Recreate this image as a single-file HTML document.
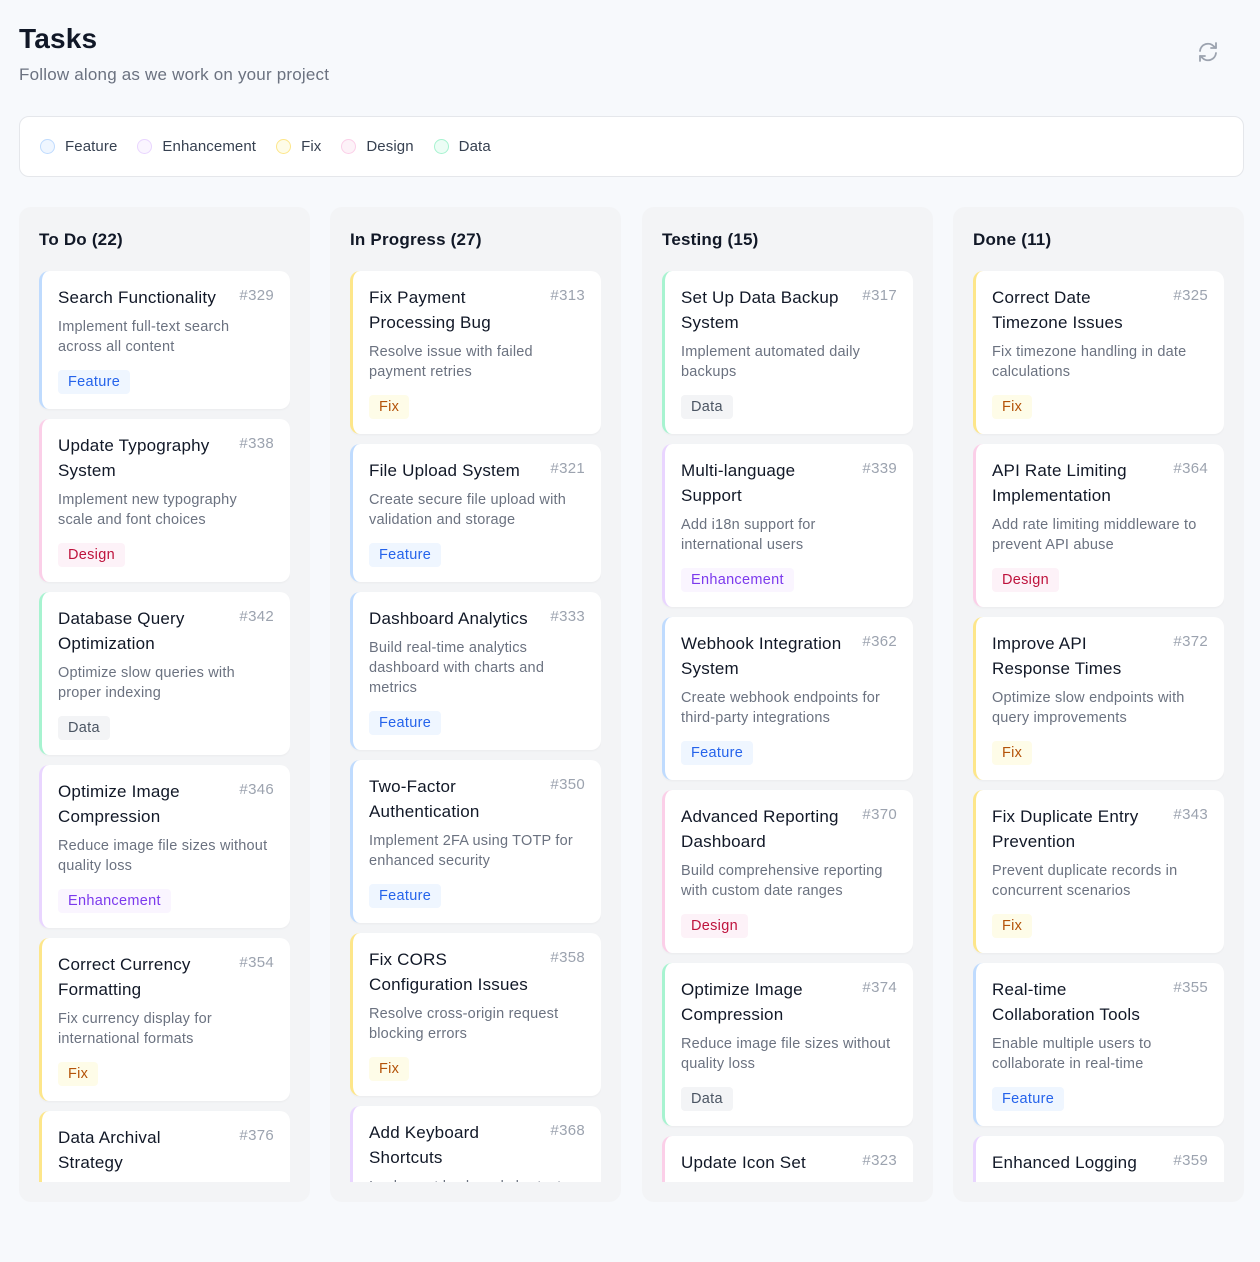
<!DOCTYPE html>
<html><head><meta charset="utf-8"><style>
*{box-sizing:border-box;margin:0;padding:0}
body{width:1260px;height:1262px;background:#f7f9fc;font-family:"Liberation Sans",sans-serif;color:#111827;position:relative;overflow:hidden}
h1{position:absolute;left:19px;top:23px;font-size:28px;font-weight:700;letter-spacing:0.2px}
.sub{position:absolute;left:19px;top:65px;font-size:17px;color:#6b7280;letter-spacing:0.2px}
.ref{position:absolute;left:1196px;top:40px}
.legend{position:absolute;left:19px;top:116px;width:1225px;height:61px;background:#fff;border:1px solid #e5e7eb;border-radius:10px;display:flex;align-items:center;padding-left:20px;font-size:15px;color:#374151;letter-spacing:0.1px}
.legend span{display:flex;align-items:center;margin-right:20px}
.legend i{width:15px;height:15px;border-radius:50%;margin-right:10px;border:1px solid}
.col{position:absolute;top:207px;width:291px;height:995px;background:#f3f4f6;border-radius:12px;padding:0 20px 20px 20px}
.col h2{font-size:17px;font-weight:700;height:64px;line-height:65px;letter-spacing:0.2px}
.list{height:911px;overflow:hidden}
.card{background:#fff;border-radius:10px;border-left:3px solid;padding:14px 16px 15px 16px;margin-bottom:10px;position:relative;box-shadow:0 1px 2px rgba(0,0,0,0.04)}
.t{font-size:17px;line-height:25px;white-space:nowrap;letter-spacing:0.2px}
.n{position:absolute;right:16px;top:14px;font-size:15px;color:#9ca3af;line-height:22px;letter-spacing:0.3px}
.d{font-size:14.5px;line-height:20px;color:#6b7280;margin-top:7px;white-space:nowrap;letter-spacing:0.2px}
.g{display:inline-block;margin-top:13px;height:24px;line-height:24px;padding:0 10px;border-radius:4px;font-size:14.5px;letter-spacing:0.3px}
.feature{border-color:#bfdbfe}.feature .g{background:#eff6ff;color:#2563eb}
.fix{border-color:#fde68a}.fix .g{background:#fefce8;color:#b45309}
.design{border-color:#fbcfe8}.design .g{background:#fdf2f8;color:#be123c}
.data{border-color:#a7f3d0}.data .g{background:#f3f4f6;color:#4b5563}
.enh{border-color:#e9d5ff}.enh .g{background:#faf5ff;color:#7c3aed}
</style></head><body>
<h1>Tasks</h1>
<div class="sub">Follow along as we work on your project</div>
<svg class="ref" width="24" height="24" viewBox="0 0 24 24" fill="none" stroke="#9ca3af" stroke-width="1.8" stroke-linecap="round" stroke-linejoin="round"><path d="M4 11a8 8 0 0 1 14-4.5L20 8"/><path d="M20 3v5h-5"/><path d="M20 13a8 8 0 0 1-14 4.5L4 16"/><path d="M4 21v-5h5"/></svg>
<div class="legend">
<span><i style="background:#eff6ff;border-color:#bfdbfe"></i>Feature</span>
<span><i style="background:#faf5ff;border-color:#e9d5ff"></i>Enhancement</span>
<span><i style="background:#fefce8;border-color:#fde68a"></i>Fix</span>
<span><i style="background:#fdf2f8;border-color:#fbcfe8"></i>Design</span>
<span><i style="background:#ecfdf5;border-color:#a7f3d0"></i>Data</span>
</div>

<div class="col" style="left:19px"><h2>To Do (22)</h2><div class="list">
<div class="card feature"><div class="t">Search Functionality</div><div class="n">#329</div><div class="d">Implement full-text search<br>across all content</div><div class="g">Feature</div></div>
<div class="card design"><div class="t">Update Typography<br>System</div><div class="n">#338</div><div class="d">Implement new typography<br>scale and font choices</div><div class="g">Design</div></div>
<div class="card data"><div class="t">Database Query<br>Optimization</div><div class="n">#342</div><div class="d">Optimize slow queries with<br>proper indexing</div><div class="g">Data</div></div>
<div class="card enh"><div class="t">Optimize Image<br>Compression</div><div class="n">#346</div><div class="d">Reduce image file sizes without<br>quality loss</div><div class="g">Enhancement</div></div>
<div class="card fix"><div class="t">Correct Currency<br>Formatting</div><div class="n">#354</div><div class="d">Fix currency display for<br>international formats</div><div class="g">Fix</div></div>
<div class="card fix"><div class="t">Data Archival<br>Strategy</div><div class="n">#376</div><div class="d">Implement data archival<br>policies</div><div class="g">Fix</div></div>
</div></div>

<div class="col" style="left:330px"><h2>In Progress (27)</h2><div class="list">
<div class="card fix"><div class="t">Fix Payment<br>Processing Bug</div><div class="n">#313</div><div class="d">Resolve issue with failed<br>payment retries</div><div class="g">Fix</div></div>
<div class="card feature"><div class="t">File Upload System</div><div class="n">#321</div><div class="d">Create secure file upload with<br>validation and storage</div><div class="g">Feature</div></div>
<div class="card feature"><div class="t">Dashboard Analytics</div><div class="n">#333</div><div class="d">Build real-time analytics<br>dashboard with charts and<br>metrics</div><div class="g">Feature</div></div>
<div class="card feature"><div class="t">Two-Factor<br>Authentication</div><div class="n">#350</div><div class="d">Implement 2FA using TOTP for<br>enhanced security</div><div class="g">Feature</div></div>
<div class="card fix"><div class="t">Fix CORS<br>Configuration Issues</div><div class="n">#358</div><div class="d">Resolve cross-origin request<br>blocking errors</div><div class="g">Fix</div></div>
<div class="card enh"><div class="t">Add Keyboard<br>Shortcuts</div><div class="n">#368</div><div class="d">Implement keyboard shortcuts<br>for power users</div><div class="g">Enhancement</div></div>
</div></div>

<div class="col" style="left:642px"><h2>Testing (15)</h2><div class="list">
<div class="card data"><div class="t">Set Up Data Backup<br>System</div><div class="n">#317</div><div class="d">Implement automated daily<br>backups</div><div class="g">Data</div></div>
<div class="card enh"><div class="t">Multi-language<br>Support</div><div class="n">#339</div><div class="d">Add i18n support for<br>international users</div><div class="g">Enhancement</div></div>
<div class="card feature"><div class="t">Webhook Integration<br>System</div><div class="n">#362</div><div class="d">Create webhook endpoints for<br>third-party integrations</div><div class="g">Feature</div></div>
<div class="card design"><div class="t">Advanced Reporting<br>Dashboard</div><div class="n">#370</div><div class="d">Build comprehensive reporting<br>with custom date ranges</div><div class="g">Design</div></div>
<div class="card data"><div class="t">Optimize Image<br>Compression</div><div class="n">#374</div><div class="d">Reduce image file sizes without<br>quality loss</div><div class="g">Data</div></div>
<div class="card design"><div class="t">Update Icon Set</div><div class="n">#323</div><div class="d">Refresh icons across<br>the app</div><div class="g">Design</div></div>
</div></div>

<div class="col" style="left:953px"><h2>Done (11)</h2><div class="list">
<div class="card fix"><div class="t">Correct Date<br>Timezone Issues</div><div class="n">#325</div><div class="d">Fix timezone handling in date<br>calculations</div><div class="g">Fix</div></div>
<div class="card design"><div class="t">API Rate Limiting<br>Implementation</div><div class="n">#364</div><div class="d">Add rate limiting middleware to<br>prevent API abuse</div><div class="g">Design</div></div>
<div class="card fix"><div class="t">Improve API<br>Response Times</div><div class="n">#372</div><div class="d">Optimize slow endpoints with<br>query improvements</div><div class="g">Fix</div></div>
<div class="card fix"><div class="t">Fix Duplicate Entry<br>Prevention</div><div class="n">#343</div><div class="d">Prevent duplicate records in<br>concurrent scenarios</div><div class="g">Fix</div></div>
<div class="card feature"><div class="t">Real-time<br>Collaboration Tools</div><div class="n">#355</div><div class="d">Enable multiple users to<br>collaborate in real-time</div><div class="g">Feature</div></div>
<div class="card enh"><div class="t">Enhanced Logging</div><div class="n">#359</div><div class="d">Improve logging across<br>services</div><div class="g">Enhancement</div></div>
</div></div>
</body></html>
